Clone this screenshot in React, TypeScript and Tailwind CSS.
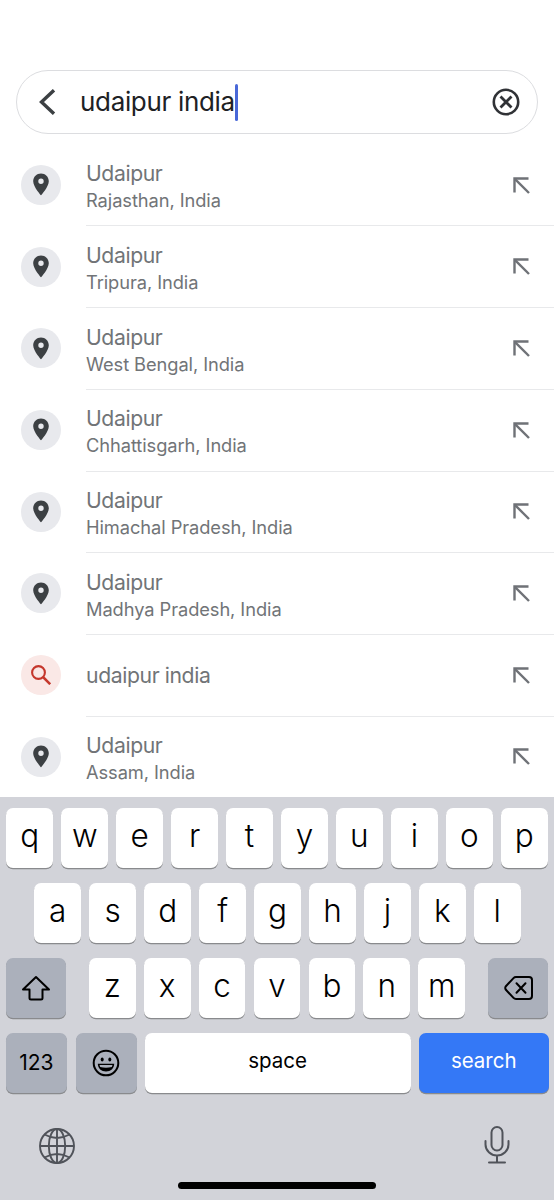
import type { ReactNode } from "react";

type Suggestion = { title: string; region?: string; query?: boolean };

const suggestions: Suggestion[] = [
  { title: "Udaipur", region: "Rajasthan, India" },
  { title: "Udaipur", region: "Tripura, India" },
  { title: "Udaipur", region: "West Bengal, India" },
  { title: "Udaipur", region: "Chhattisgarh, India" },
  { title: "Udaipur", region: "Himachal Pradesh, India" },
  { title: "Udaipur", region: "Madhya Pradesh, India" },
  { title: "udaipur india", query: true },
  { title: "Udaipur", region: "Assam, India" },
];

function PinIcon() {
  return (
    <svg width="16" height="23" viewBox="0 0 16 23" fill="#3c4043">
      <path
        fillRule="evenodd"
        d="M8 .5C3.700.5.200 3.900.200 8.200.200 13.800 8 22.300 8 22.300s7.800-8.500 7.800-14.100C15.800 3.900 12.300.5 8 .5Zm0 5a2.700 2.700 0 1 1 0 5.400 2.700 2.700 0 0 1 0-5.400Z"
      />
    </svg>
  );
}

function SearchIcon() {
  return (
    <svg width="20" height="20" viewBox="0 0 20 20" fill="none" stroke="#c5372c" strokeWidth="2.100">
      <circle cx="7.500" cy="7.500" r="6.400" />
      <path d="m11.900 11.900 7.300 7.300" strokeWidth="2.600" />
    </svg>
  );
}

function FillArrow() {
  return (
    <svg width="17" height="17" viewBox="0 0 17 17" fill="none" stroke="#6f7277" strokeWidth="2.400">
      <path d="M15.500 1.500H1.500V15.500" />
      <path d="M1.800 1.800 16 16" />
    </svg>
  );
}

function Row({ title, region, query }: Suggestion) {
  return (
    <li className="flex h-[81.700px] shrink-0">
      <div className="flex w-[86px] items-center pb-[1.500px] pl-[21.300px]">
        <div
          className={
            query
              ? "flex size-[40px] items-center justify-center rounded-full bg-[#fae8e6] pr-px"
              : "flex size-[40px] items-center justify-center rounded-full bg-[#e8e9ed]"
          }
        >
          {query ? <SearchIcon /> : <PinIcon />}
        </div>
      </div>
      <div className="flex flex-1 items-center justify-between border-b border-[#e8e9eb] pr-[24px]">
        <div className={region ? "pt-[2px] whitespace-nowrap text-[#717477]" : "whitespace-nowrap text-[#717477]"}>
          <div className="text-[21.200px] leading-[28px] tracking-[-0.400px]">{title}</div>
          {region && <div className="text-[18.300px] leading-[26px] tracking-[-0.080px]">{region}</div>}
        </div>
        <FillArrow />
      </div>
    </li>
  );
}

const keyBase =
  "flex h-[60px] shrink-0 items-center justify-center rounded-[7px] shadow-[0_1.300px_0_#898a8d]";

function Letter({ children }: { children: string }) {
  return (
    <div className={`${keyBase} w-[46.800px] bg-white pb-[4px] text-[31.500px] font-[350] text-black`}>
      {children}
    </div>
  );
}

function Letters({ keys }: { keys: string }) {
  return (
    <div className="flex gap-[8.150px]">
      {keys.split("").map((k) => (
        <Letter key={k}>{k}</Letter>
      ))}
    </div>
  );
}

function ActionKey({ width, children }: { width: string; children: ReactNode }) {
  return <div className={`${keyBase} ${width} bg-[#abb0bb] text-black`}>{children}</div>;
}

function Keyboard() {
  return (
    <div className="flex flex-1 flex-col bg-[#d2d3d9] pt-[10.500px]">
      <div className="flex flex-col gap-[15px] px-[5.500px]">
        <div className="flex justify-center">
          <Letters keys="qwertyuiop" />
        </div>
        <div className="flex justify-center pl-px">
          <Letters keys="asdfghjkl" />
        </div>
        <div className="flex justify-between">
          <ActionKey width="w-[60px]">
            <svg width="30" height="26" viewBox="0 0 30 26" fill="none" stroke="#000" strokeWidth="2" strokeLinejoin="round">
              <path d="M15 2 28 14.500H21.500V23q0 1.500-1.500 1.500H10Q8.500 24.500 8.500 23V14.500H2Z" />
            </svg>
          </ActionKey>
          <Letters keys="zxcvbnm" />
          <ActionKey width="w-[60px]">
            <svg className="ml-[2px]" width="30" height="26" viewBox="0 0 30 26" fill="none" stroke="#000" strokeWidth="2" strokeLinecap="round" strokeLinejoin="round">
              <path d="M12 2H25Q28 2 28 5V21Q28 24 25 24H12Q10.500 24 9.500 22.900L1.900 14.800Q.6 13 1.900 11.200L9.500 3.100Q10.500 2 12 2Z" />
              <path d="m12.500 8.200 9 9.600M21.500 8.200l-9 9.600" />
            </svg>
          </ActionKey>
        </div>
        <div className="flex">
          <ActionKey width="w-[61.500px]">
            <span className="text-[21px] font-[380] tracking-[-0.100px]">123</span>
          </ActionKey>
          <div className="w-[8.500px]" />
          <ActionKey width="w-[61.500px]">
            <svg width="28" height="28" viewBox="0 0 28 28" fill="none" stroke="#000" strokeWidth="2">
              <circle cx="14" cy="14" r="12.300" />
              <ellipse cx="10.200" cy="10.500" rx="1.500" ry="2" fill="#000" stroke="none" />
              <ellipse cx="17.800" cy="10.500" rx="1.500" ry="2" fill="#000" stroke="none" />
              <path d="M5.800 14.800H22.200C22 19.700 18.700 22.500 14 22.500S6 19.700 5.800 14.800Z" fill="#000" stroke="none" />
              <path d="M7.500 16H20.500L19.800 18Q14 19.300 8.200 18Z" fill="#abb0bb" stroke="none" />
            </svg>
          </ActionKey>
          <div className={`${keyBase} ml-[7.500px] w-[266px] bg-white pb-[3px] text-[20.500px] text-black`}>space</div>
          <div className={`${keyBase} ml-[8.500px] w-[129.500px] bg-[#3478f6] pb-[3px] text-[20.500px] text-white`}>search</div>
        </div>
      </div>
      <div className="mt-[32px] flex items-start justify-between pr-[44px] pl-[38px]">
        <svg className="mt-[2px]" width="38" height="38" viewBox="0 0 38 38" fill="none" stroke="#50535a" strokeWidth="1.900">
          <circle cx="19" cy="19" r="17" />
          <ellipse cx="19" cy="19" rx="8.200" ry="17" />
          <path d="M19 2V36M2 19H36M6.500 7.500Q19 14.500 31.500 7.500M6.500 30.500Q19 23.500 31.500 30.500" />
        </svg>
        <svg width="26" height="40" viewBox="0 0 26 40" fill="none" stroke="#50535a" strokeWidth="2" strokeLinecap="round">
          <rect x="7.500" y="2" width="11" height="23.500" rx="5.500" />
          <path d="M1.500 16V19.500A11.500 11 0 0 0 24.500 19.500V16M13 30.500V37.500M5 37.500H21" />
        </svg>
      </div>
      <div className="mt-auto mb-[11px] h-[7px] w-[198px] self-center rounded-full bg-black" />
    </div>
  );
}

export default function App() {
  return (
    <main className="flex h-[1200px] w-[554px] flex-col overflow-hidden bg-white font-['Inter','Liberation_Sans',sans-serif]">
      <header className="px-[16px] pt-[70px]">
        <div className="flex h-[64px] items-center rounded-full border-[1.500px] border-[#dcdde0] pr-[17px] pl-[20.500px]">
          <svg width="18" height="26" viewBox="0 0 18 26" fill="none" stroke="#3c4043" strokeWidth="3.400">
            <path d="M16 1.200 3.500 13 16 24.800" />
          </svg>
          <div className="ml-[24.500px] flex items-center">
            <span className="text-[26px] leading-[36px] tracking-[-0.330px] whitespace-nowrap text-[#202124]">udaipur india</span>
            <span className="h-[37px] w-[3px] rounded-full bg-[#4968d8]" />
          </div>
          <svg className="ml-auto" width="28" height="28" viewBox="0 0 28 28" fill="none" stroke="#303236" strokeWidth="2.600">
            <circle cx="14" cy="14" r="12.200" />
            <path d="m8.500 8.500 11 11M19.500 8.500l-11 11" strokeWidth="2.800" />
          </svg>
        </div>
      </header>
      <ul className="flex h-[663px] flex-col overflow-hidden pt-[10.800px]">
        {suggestions.map((s, i) => (
          <Row key={i} {...s} />
        ))}
      </ul>
      <Keyboard />
    </main>
  );
}
